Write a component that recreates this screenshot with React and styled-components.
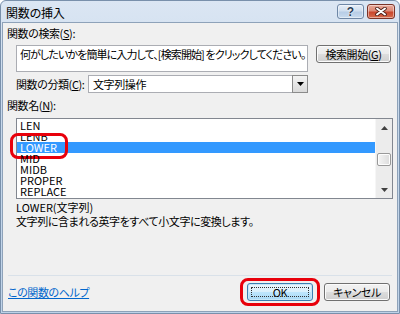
import React from "react";
import styled, { createGlobalStyle } from "styled-components";

const GlobalStyle = createGlobalStyle`
  html, body { margin: 0; padding: 0; background: #ffffff; }
  body {
    font-family: "Noto Sans CJK JP", "Noto Sans", sans-serif;
    font-size: 11px;
    letter-spacing: -0.4px;
    color: #000;
    font-feature-settings: "palt";
  }
  * { box-sizing: border-box; }
`;

const Window = styled.div`
  width: 400px;
  height: 314px;
  display: flex;
  flex-direction: column;
  border: 1px solid #7990ab;
  border-radius: 6px 6px 0 0;
  padding: 0 1px 1px;
  background: linear-gradient(to bottom, #dbe6f3 0%, #c8d9ec 30%, #bed2e8 100%);
`;

const TitleBar = styled.div`
  height: 21px;
  flex: 0 0 21px;
  display: flex;
  align-items: flex-start;
  padding: 0 3px 0 4px;
`;

const TitleText = styled.div`
  padding-top: 4px;
  line-height: 16px;
  font-size: 12px;
  letter-spacing: -0.2px;
  color: #000;
`;

const CaptionButtons = styled.div`
  margin-left: auto;
  margin-top: 3px;
  display: flex;
  gap: 3px;
`;

const CaptionButton = styled.div`
  width: ${(p) => (p.close ? 28 : 27)}px;
  height: 15px;
  border-radius: 3px;
  display: flex;
  align-items: center;
  justify-content: center;
  border: 1px solid ${(p) => (p.close ? "#7a3327" : "#6e87a6")};
  box-shadow: inset 0 0 0 1px rgba(255, 255, 255, 0.45);
  background: ${(p) =>
    p.close
      ? "linear-gradient(to bottom, #e9a99a 0%, #dd8a76 45%, #c9462d 55%, #d76c4c 100%)"
      : "linear-gradient(to bottom, #e6eef8 0%, #cfdeef 45%, #b7cde6 55%, #c9dbee 100%)"};
  font-family: "Liberation Sans", sans-serif;
  font-weight: bold;
  font-size: 12px;
  letter-spacing: 0;
  color: #2a3d57;
  text-shadow: 0 0 2px #fff, 0 0 1px #fff;
`;

const Client = styled.div`
  flex: 1;
  display: flex;
  flex-direction: column;
  background: #f0f0f0;
  border: 1px solid #8ea2b9;
  padding: 3px 4px 0 4px;
`;

const Label = styled.div`
  line-height: 14px;
  height: 14px;
  margin-top: ${(p) => p.top || 0}px;
  white-space: nowrap;
`;

const Key = styled.span`
  text-decoration: underline;
`;

const SearchRow = styled.div`
  display: flex;
  align-items: flex-start;
  margin: 5px 0 0 9px;
`;

const SearchBox = styled.div`
  width: 292px;
  height: 27px;
  background: #fff;
  border: 1px solid #abadb3;
  padding: 1px 3px;
  line-height: 14px;
  letter-spacing: -0.9px;
  white-space: nowrap;
  overflow: hidden;
`;

const PushButton = styled.div`
  position: relative;
  width: ${(p) => p.width || 66}px;
  height: 18px;
  display: flex;
  align-items: center;
  justify-content: center;
  border-radius: 3px;
  border: 1px solid ${(p) => (p.primary ? "#3c7fb1" : "#707070")};
  box-shadow: inset 0 0 0 1px ${(p) => (p.primary ? "#c6e6f8" : "#fbfbfb")};
  background: ${(p) =>
    p.primary
      ? "linear-gradient(to bottom, #eaf6fd 0%, #d9f0fc 50%, #bee6fd 51%, #a7d9f5 100%)"
      : "linear-gradient(to bottom, #f2f2f2 0%, #ebebeb 50%, #dddddd 51%, #cfcfcf 100%)"};
  line-height: 14px;
  white-space: nowrap;
  margin-left: ${(p) => p.gap || 0}px;

  ${(p) =>
    p.primary &&
    `&::after {
      content: "";
      position: absolute;
      left: 3px;
      right: 3px;
      top: 3px;
      bottom: 3px;
      border: 1px dotted #333;
    }`}
`;

const CategoryRow = styled.div`
  display: flex;
  align-items: center;
  margin: 3px 0 0 9px;
`;

const CategoryLabel = styled.div`
  flex: 0 0 72px;
  line-height: 14px;
  white-space: nowrap;
`;

const Combo = styled.div`
  width: 220px;
  height: 18px;
  display: flex;
  align-items: stretch;
  background: #fff;
  border: 1px solid #abadb3;
  border-right: none;
`;

const ComboText = styled.div`
  flex: 1;
  padding-left: 4px;
  line-height: 16px;
`;

const ComboArrow = styled.div`
  width: 16px;
  margin-top: -1px;
  height: 18px;
  display: flex;
  align-items: center;
  justify-content: center;
  border: 1px solid #8b8b8b;
  background: linear-gradient(to bottom, #f4f4f4 0%, #e6e6e6 50%, #dadada 100%);
`;

const ListBox = styled.div`
  margin: 6px 0 0 9px;
  height: 81px;
  display: flex;
  background: #fff;
  border: 1px solid #828790;
`;

const Rows = styled.div`
  flex: 1;
  padding-top: 1px;
`;

const Row = styled.div`
  position: relative;
  height: 11px;
  line-height: 11px;
  font-size: 11px;
  letter-spacing: 0;
  padding-left: 3px;
  background: ${(p) => (p.selected ? "#3399ff" : "transparent")};
  color: ${(p) => (p.selected ? "#fff" : "#000")};
`;

const Ring = styled.div`
  position: absolute;
  left: -7px;
  top: -9px;
  width: 58px;
  height: 26px;
  border: 3px solid #e8000b;
  border-radius: 8px;
  pointer-events: none;
`;

const ScrollBar = styled.div`
  width: 17px;
  display: flex;
  flex-direction: column;
  background: #ececec;
  border-left: 1px solid #f6f6f6;
`;

const ScrollArrow = styled.div`
  height: 17px;
  display: flex;
  align-items: center;
  justify-content: center;
`;

const ScrollTrack = styled.div`
  flex: 1;
`;

const Thumb = styled.div`
  width: 14px;
  height: 13px;
  margin-left: 1px;
  border: 1px solid #999;
  border-radius: 2px;
  background: linear-gradient(to right, #f5f5f5 0%, #e8e8e8 50%, #dcdcdc 100%);
  box-shadow: inset 0 0 0 1px #fdfdfd;
`;

const Signature = styled.div`
  margin: 1px 0 0 9px;
  line-height: 14px;
  letter-spacing: 0;
`;

const Description = styled.div`
  margin-left: 9px;
  line-height: 14px;
  white-space: nowrap;
`;

const Separator = styled.div`
  margin: 47px 1px 0 1px;
  border-top: 1px solid #d9e1e9;
`;

const Footer = styled.div`
  display: flex;
  align-items: center;
  margin: 2px 3px 0 1px;
`;

const HelpLink = styled.a`
  color: #0066cc;
  text-decoration: underline;
  line-height: 14px;
  cursor: pointer;
`;

const FooterButtons = styled.div`
  margin-left: auto;
  display: flex;
  align-items: center;
`;

const FocusRing = styled.div`
  padding: 2px 4px;
  border: 3px solid #e8000b;
  border-radius: 8px;
`;

const functions = ["LEN", "LENB", "LOWER", "MID", "MIDB", "PROPER", "REPLACE"];

function Triangle({ down }) {
  return (
    <svg width="7" height="4" viewBox="0 0 7 4">
      <path d={down ? "M0 0 H7 L3.5 4 Z" : "M0 4 H7 L3.5 0 Z"} fill="#404040" />
    </svg>
  );
}

function App() {
  return (
    <>
      <GlobalStyle />
      <Window>
        <TitleBar>
          <TitleText>関数の挿入</TitleText>
          <CaptionButtons>
            <CaptionButton>?</CaptionButton>
            <CaptionButton close>
              <svg width="12" height="9" viewBox="0 0 12 9">
                <path d="M2 1.5 L10 7.5 M10 1.5 L2 7.5" stroke="#4a1c14" strokeWidth="3.6" strokeLinecap="round" />
                <path d="M2 1.5 L10 7.5 M10 1.5 L2 7.5" stroke="#ffffff" strokeWidth="2" strokeLinecap="round" />
              </svg>
            </CaptionButton>
          </CaptionButtons>
        </TitleBar>
        <Client>
          <Label>
            関数の検索(<Key>S</Key>):
          </Label>
          <SearchRow>
            <SearchBox>何がしたいかを簡単に入力して、[検索開始] をクリックしてください。</SearchBox>
            <PushButton width={75} gap={8}>
              検索開始(<Key>G</Key>)
            </PushButton>
          </SearchRow>
          <CategoryRow>
            <CategoryLabel>
              関数の分類(<Key>C</Key>):
            </CategoryLabel>
            <Combo>
              <ComboText>文字列操作</ComboText>
              <ComboArrow>
                <svg width="7" height="4" viewBox="0 0 7 4">
                  <path d="M0 0 H7 L3.5 4 Z" fill="#000" />
                </svg>
              </ComboArrow>
            </Combo>
          </CategoryRow>
          <Label top={5}>
            関数名(<Key>N</Key>):
          </Label>
          <ListBox>
            <Rows>
              {functions.map((name) => (
                <Row key={name} selected={name === "LOWER"}>
                  {name}
                  {name === "LOWER" && <Ring />}
                </Row>
              ))}
            </Rows>
            <ScrollBar>
              <ScrollArrow>
                <Triangle />
              </ScrollArrow>
              <ScrollTrack>
                <Thumb style={{ marginTop: 17 }} />
              </ScrollTrack>
              <ScrollArrow>
                <Triangle down />
              </ScrollArrow>
            </ScrollBar>
          </ListBox>
          <Signature>LOWER(文字列)</Signature>
          <Description>文字列に含まれる英字をすべて小文字に変換します。</Description>
          <Separator />
          <Footer>
            <HelpLink>この関数のヘルプ</HelpLink>
            <FooterButtons>
              <FocusRing>
                <PushButton primary>OK</PushButton>
              </FocusRing>
              <PushButton gap={4}>キャンセル</PushButton>
            </FooterButtons>
          </Footer>
        </Client>
      </Window>
    </>
  );
}

export default App;
